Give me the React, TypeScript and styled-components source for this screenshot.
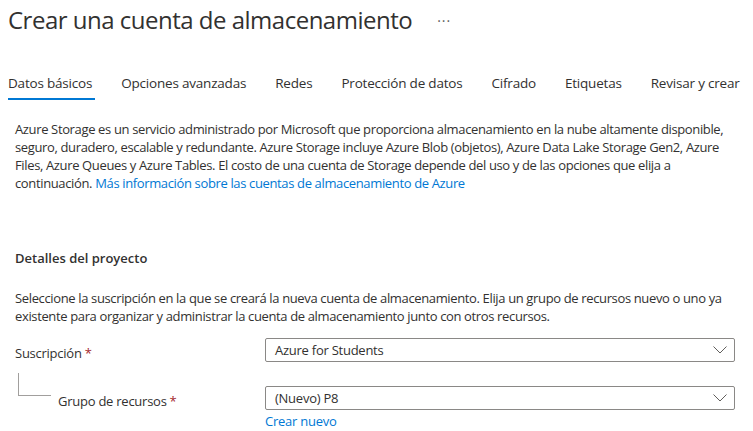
import React from "react";
import styled, { createGlobalStyle } from "styled-components";

const Global = createGlobalStyle`
  html, body { margin: 0; padding: 0; background: #ffffff; }
  body {
    font-family: "Open Sans", "Noto Sans", "Liberation Sans", sans-serif;
    color: #323130;
    -webkit-font-smoothing: antialiased;
  }
  * { box-sizing: border-box; }
`;

const Page = styled.div`
  width: 753px;
  height: 431px;
  overflow: hidden;
  display: flex;
  flex-direction: column;
`;

const Header = styled.header`
  display: flex;
  align-items: center;
  padding: 4px 8px 0;
  height: 36px;
`;

const Title = styled.h1`
  margin: 0;
  font-size: 24px;
  line-height: 32px;
  font-weight: 400;
  color: #323130;
  letter-spacing: -0.5px;
`;

const More = styled.span`
  margin-left: 25px;
  font-size: 14px;
  color: #605e5c;
  letter-spacing: 1px;
`;

const Tabs = styled.nav`
  display: flex;
  gap: 29px;
  padding: 0 8px;
  margin-top: 37px;
  white-space: nowrap;
`;

const Tab = styled.div<{ $active?: boolean }>`
  font-size: 13.5px;
  letter-spacing: -0.2px;
  line-height: 20px;
  padding: 0 3px 5px 0;
  margin-right: -3px;
  border-bottom: 2px solid ${(p) => (p.$active ? "#0078d4" : "transparent")};
  color: #323130;
`;

const Content = styled.main`
  padding: 0 15px;
  display: flex;
  flex-direction: column;
`;

const Paragraph = styled.p<{ $top: number }>`
  margin: ${(p) => p.$top}px 0 0;
  font-size: 13px;
  line-height: 18px;
  letter-spacing: -0.36px;
  max-width: 724px;
`;

const Link = styled.a`
  color: #0078d4;
  text-decoration: none;
`;

const SectionTitle = styled.h2`
  margin: 56px 0 0;
  font-size: 13px;
  line-height: 20px;
  font-weight: 600;
`;

const Form = styled.div`
  margin-top: 13px;
  display: flex;
  flex-direction: column;
  gap: 23px;
`;

const Row = styled.div`
  display: grid;
  grid-template-columns: 250px 470px;
  align-items: start;
`;

const LabelCell = styled.div`
  display: flex;
  align-items: flex-start;
`;

const Connector = styled.div`
  width: 33px;
  height: 23px;
  margin: -13px 7px 0 3px;
  border-left: 1px solid #a19f9d;
  border-bottom: 1px solid #a19f9d;
`;

const Label = styled.label`
  font-size: 13px;
  line-height: 20px;
  letter-spacing: -0.25px;
  padding-top: 5px;
`;

const Required = styled.span`
  color: #a4262c;
  margin-left: 3px;
`;

const FieldCell = styled.div`
  display: flex;
  flex-direction: column;
`;

const Select = styled.div`
  height: 24px;
  border: 1px solid #8a8886;
  border-radius: 2px;
  display: flex;
  align-items: center;
  justify-content: space-between;
  padding: 0 7px 0 9px;
  font-size: 13px;
  letter-spacing: -0.25px;
  color: #323130;
`;

const SubLink = styled.a`
  color: #0078d4;
  font-size: 13px;
  line-height: 18px;
  letter-spacing: -0.25px;
  margin-top: 2px;
  text-decoration: none;
`;

const Chevron = () => (
  <svg width="14" height="8" viewBox="0 0 14 8" aria-hidden="true">
    <path d="M0.5 0.5 L7 7 L13.5 0.5" fill="none" stroke="#605e5c" strokeWidth="1" />
  </svg>
);

const tabs = [
  "Datos básicos",
  "Opciones avanzadas",
  "Redes",
  "Protección de datos",
  "Cifrado",
  "Etiquetas",
  "Revisar y crear",
];

export default function App() {
  return (
    <>
      <Global />
      <Page>
        <Header>
          <Title>Crear una cuenta de almacenamiento</Title>
          <More>···</More>
        </Header>
        <Tabs>
          {tabs.map((t, i) => (
            <Tab key={t} $active={i === 0}>
              {t}
            </Tab>
          ))}
        </Tabs>
        <Content>
          <Paragraph $top={20}>
            Azure Storage es un servicio administrado por Microsoft que proporciona almacenamiento en la nube
            altamente disponible, seguro, duradero, escalable y redundante. Azure Storage incluye Azure Blob
            (objetos), Azure Data Lake Storage Gen2, Azure Files, Azure Queues y Azure Tables. El costo de una
            cuenta de Storage depende del uso y de las opciones que elija a continuación.{" "}
            <Link href="#">Más información sobre las cuentas de almacenamiento de Azure</Link>
          </Paragraph>
          <SectionTitle>Detalles del proyecto</SectionTitle>
          <Paragraph $top={21}>
            Seleccione la suscripción en la que se creará la nueva cuenta de almacenamiento. Elija un grupo de
            recursos nuevo o uno ya existente para organizar y administrar la cuenta de almacenamiento junto con
            otros recursos.
          </Paragraph>
          <Form>
            <Row>
              <LabelCell>
                <Label>
                  Suscripción<Required>*</Required>
                </Label>
              </LabelCell>
              <FieldCell>
                <Select>
                  <span>Azure for Students</span>
                  <Chevron />
                </Select>
              </FieldCell>
            </Row>
            <Row>
              <LabelCell>
                <Connector />
                <Label>
                  Grupo de recursos<Required>*</Required>
                </Label>
              </LabelCell>
              <FieldCell>
                <Select>
                  <span>(Nuevo) P8</span>
                  <Chevron />
                </Select>
                <SubLink href="#">Crear nuevo</SubLink>
              </FieldCell>
            </Row>
          </Form>
        </Content>
      </Page>
    </>
  );
}
